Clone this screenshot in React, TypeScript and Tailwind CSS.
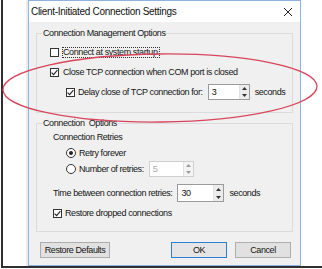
import React from "react";

function CheckBox({ checked }: { checked?: boolean }) {
  return (
    <span className="flex h-[9px] w-[9px] shrink-0 items-center justify-center border border-[#333333] bg-white">
      {checked && (
        <svg width="7" height="7" viewBox="0 0 7 7">
          <path d="M0.6 3.6 L2.6 5.6 L6.4 1.2" fill="none" stroke="#222" strokeWidth="1.1" />
        </svg>
      )}
    </span>
  );
}

function Radio({ checked }: { checked?: boolean }) {
  return (
    <span className="flex h-[10px] w-[10px] shrink-0 items-center justify-center rounded-full border border-[#333333] bg-white">
      {checked && <span className="h-[4px] w-[4px] rounded-full bg-[#222]" />}
    </span>
  );
}

function Spin({ value, w, h, disabled }: { value: string; w: string; h: string; disabled?: boolean }) {
  return (
    <span
      className={`flex ${w} ${h} shrink-0 border bg-white ${disabled ? "border-[#cfcfcf] text-[#a8a8a8]" : "border-[#9a9a9a] text-[#111]"}`}
    >
      <span className="flex flex-1 items-center pl-[3px]">{value}</span>
      <span className="flex w-[10px] flex-col border-l border-[#e2e2e2]">
        <span className={`flex flex-1 items-center justify-center ${disabled ? "bg-[#f4f4f4]" : "bg-[#ececec]"}`}>
          <svg width="5" height="3" viewBox="0 0 5 3">
            <path d="M0 3 L2.5 0 L5 3 Z" fill={disabled ? "#9a9a9a" : "#333"} />
          </svg>
        </span>
        <span className={`flex flex-1 items-center justify-center ${disabled ? "bg-[#f4f4f4]" : "bg-[#ececec]"}`}>
          <svg width="5" height="3" viewBox="0 0 5 3">
            <path d="M0 0 L2.5 3 L5 0 Z" fill={disabled ? "#9a9a9a" : "#333"} />
          </svg>
        </span>
      </span>
    </span>
  );
}

export default function App() {
  return (
    <div className="relative h-[269px] w-[322px] overflow-hidden bg-white font-['Liberation_Sans',Arial,sans-serif] text-[9px] leading-[12px] tracking-[-0.4px] text-[#151515]">
      <div className="ml-[1px] flex h-[268px] w-[321px] border-b-2 border-l-2 border-[#2e2e2e] pl-[25px]">
        <div className="flex h-[266px] w-[273px] flex-col border border-[#8fb3dc] bg-[#f0f0f0] shadow-[-2px_0_0_#ededed]">
          {/* title bar */}
          <div className="flex h-[21px] shrink-0 items-center justify-between bg-white pl-[2px] pr-[7px]">
            <span className="text-[10px] tracking-[-0.3px] text-[#111]">Client-Initiated Connection Settings</span>
            <svg width="10" height="10" viewBox="0 0 10 10">
              <path d="M1 1 L9 9 M9 1 L1 9" stroke="#222" strokeWidth="1" />
            </svg>
          </div>

          {/* group 1 */}
          <fieldset className="mx-[7px] mt-[5px] border border-[#dcdcdc] p-0 pb-[10px] pt-[3px]">
            <legend className="ml-[5px] px-[1px] leading-[12px]">Connection Management Options</legend>
            <div className="flex h-[20px] items-center pl-[13px]">
              <CheckBox />
              <span className="ml-[3px] border border-dotted border-[#333] pr-[1px] leading-[9px]">Connect at system startup</span>
            </div>
            <div className="flex h-[20px] items-center pl-[13px]">
              <CheckBox checked />
              <span className="ml-[4px]">Close TCP connection when COM port is closed</span>
            </div>
            <div className="flex h-[20px] items-center pl-[29px]">
              <CheckBox checked />
              <span className="ml-[3px]">Delay close of TCP connection for:</span>
              <span className="ml-[5px]">
                <Spin value="3" w="w-[42px]" h="h-[16px]" />
              </span>
              <span className="ml-[5px]">seconds</span>
            </div>
          </fieldset>

          {/* group 2 */}
          <fieldset className="mx-[7px] mt-[4px] border border-[#dcdcdc] p-0 pb-[10px]">
            <legend className="ml-[5px] px-[1px] leading-[12px]">Connection&nbsp; Options</legend>
            <div className="flex h-[16px] items-center pl-[16px]">Connection Retries</div>
            <div className="flex h-[16px] items-center pl-[29px]">
              <Radio checked />
              <span className="ml-[3px]">Retry forever</span>
            </div>
            <div className="flex h-[16px] items-center pl-[29px]">
              <Radio />
              <span className="ml-[3px]">Number of retries:</span>
              <span className="ml-[5px]">
                <Spin value="5" w="w-[45px]" h="h-[16px]" disabled />
              </span>
            </div>
            <div className="mt-[7px] flex h-[18px] items-center pl-[16px]">
              <span>Time between connection retries:</span>
              <span className="ml-[5px]">
                <Spin value="30" w="w-[47px]" h="h-[18px]" />
              </span>
              <span className="ml-[5px]">seconds</span>
            </div>
            <div className="mt-[3px] flex h-[16px] items-center pl-[16px]">
              <CheckBox checked />
              <span className="ml-[3px]">Restore dropped connections</span>
            </div>
          </fieldset>

          {/* buttons */}
          <div className="mt-[10px] flex h-[16px] items-stretch">
            <button className="ml-[11px] w-[70px] border border-[#adadad] bg-[#e1e1e1] leading-[12px]">Restore Defaults</button>
            <button className="ml-auto w-[56px] border border-[#2b7fd4] bg-[#e5e5e5] leading-[12px]">OK</button>
            <button className="ml-[8px] mr-[9px] w-[56px] border border-[#adadad] bg-[#e1e1e1] leading-[12px]">Cancel</button>
          </div>
        </div>
      </div>

      {/* red annotation ellipse */}
      <svg className="pointer-events-none absolute left-0 top-0" width="322" height="269" viewBox="0 0 322 269">
        <ellipse cx="160" cy="88" rx="157" ry="34" fill="none" stroke="#d8465c" strokeWidth="1.3" transform="rotate(-0.6 160 88)" />
      </svg>
    </div>
  );
}
